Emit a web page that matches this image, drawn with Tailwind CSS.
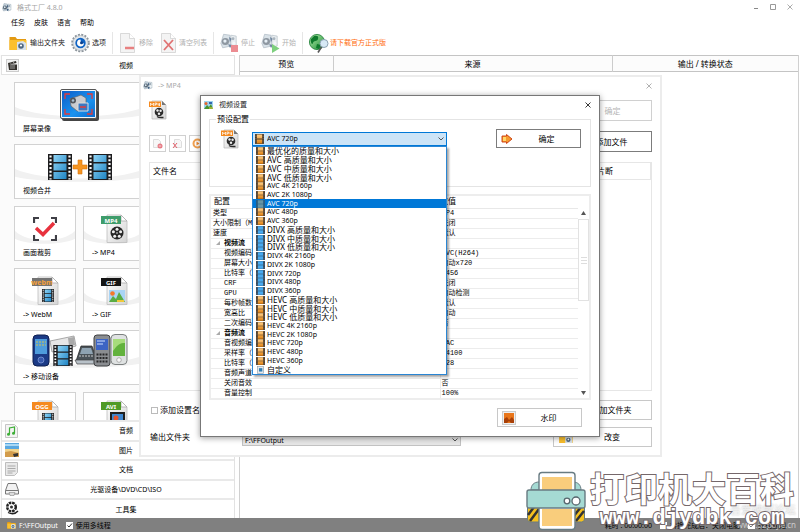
<!DOCTYPE html>
<html lang="zh-CN">
<head>
    <meta charset="UTF-8">
    <meta name="viewport" content="width=device-width, initial-scale=1.0">
    <title>格式工厂 4.8.0</title>
    <script src="https://cdn.jsdelivr.net/npm/@tailwindcss/browser@4"></script>
</head>
<body class="relative h-screen flex flex-col overflow-hidden bg-white text-[7px] leading-[9px] text-black font-['Noto_Sans','Noto_Sans_CJK_SC',sans-serif]">
    <!-- 图标库 -->
    <svg class="absolute w-0 h-0" aria-hidden="true">
        <defs>
            <linearGradient id="blueFrame" x1="0" y1="0" x2="1" y2="1"><stop offset="0" stop-color="#8fd4f5"/><stop offset="1" stop-color="#1f84c4"/></linearGradient>
            <linearGradient id="orangeFrame" x1="0" y1="0" x2="0" y2="1"><stop offset="0" stop-color="#ffd08a"/><stop offset="1" stop-color="#e08010"/></linearGradient>
            <linearGradient id="paper" x1="0" y1="0" x2="1" y2="1"><stop offset="0" stop-color="#ffffff"/><stop offset="1" stop-color="#d4d4d4"/></linearGradient>
            <linearGradient id="screenBlue" x1="0" y1="0" x2="1" y2="1"><stop offset="0" stop-color="#0a5cc8"/><stop offset="0.6" stop-color="#1b93ee"/><stop offset="1" stop-color="#0b6bd0"/></linearGradient>
            <linearGradient id="greenBall" x1="0" y1="0" x2="1" y2="1"><stop offset="0" stop-color="#b9efb0"/><stop offset="1" stop-color="#158a2e"/></linearGradient>
        </defs>
        <symbol id="film-blue" viewBox="0 0 24 26">
            <rect width="24" height="26" fill="#1d1d1f"/>
            <path d="M2.500 1.500v24M21.500 1.500v24" stroke="#fff" stroke-width="2.200" stroke-dasharray="2 1.800"/>
            <path d="M5.500 1h13v7h-13zM5.500 9.500h13v7h-13zM5.500 18h13v7h-13z" fill="url(#blueFrame)"/>
        </symbol>
        <symbol id="film-orange" viewBox="0 0 24 26" preserveAspectRatio="none">
            <rect width="24" height="26" fill="#4a3a2a"/>
            <path d="M2.500 1.500v24M21.500 1.500v24" stroke="#c9b79c" stroke-width="1.500" stroke-dasharray="2 2.500"/>
            <path d="M5 1h14v11h-14zM5 14h14v11h-14z" fill="url(#orangeFrame)"/>
        </symbol>
        <symbol id="film-sky" viewBox="0 0 24 26" preserveAspectRatio="none">
            <rect width="24" height="26" fill="#2f4254"/>
            <path d="M2.500 1.500v24M21.500 1.500v24" stroke="#b3c4d4" stroke-width="1.500" stroke-dasharray="2 2.500"/>
            <path d="M5 1h14v11h-14zM5 14h14v11h-14z" fill="#48aaf0"/>
        </symbol>
        <symbol id="film-steel" viewBox="0 0 24 26" preserveAspectRatio="none">
            <rect width="24" height="26" fill="#2b5d80"/>
            <path d="M5 1h14v11h-14zM5 14h14v11h-14z" fill="#6795a4"/>
        </symbol>
        <symbol id="custom" viewBox="0 0 24 26">
            <rect x="2" y="2" width="20" height="22" fill="#e6eaee" stroke="#8a98a5" stroke-width="2"/>
            <rect x="7" y="7" width="11" height="11" fill="#2f7fb5"/>
        </symbol>
        <symbol id="page" viewBox="0 0 22 30">
            <path d="M1 1h14l6 6v21.500H1z" fill="url(#paper)" stroke="#bdbdbd" stroke-width=".8"/>
            <path d="M15 1v6h6z" fill="#fff" stroke="#aaa" stroke-width=".8"/>
        </symbol>
        <symbol id="reel" viewBox="0 0 14 14">
            <circle cx="7" cy="7" r="6.500" fill="#262626"/>
            <g fill="#eee"><circle cx="7" cy="3.200" r="1.500"/><circle cx="10.600" cy="5.800" r="1.500"/><circle cx="9.300" cy="10.200" r="1.500"/><circle cx="4.700" cy="10.200" r="1.500"/><circle cx="3.400" cy="5.800" r="1.500"/><circle cx="7" cy="7" r=".8"/></g>
        </symbol>
        <symbol id="factory" viewBox="0 0 20 18">
            <path d="M4 1l7 1 1 12-9 2-2-5z" fill="#c6d3dd" stroke="#8597a6" stroke-width=".8"/>
            <path d="M12 2l6 1v11l-6 2z" fill="#dfe6eb" stroke="#91a1ad" stroke-width=".8"/>
            <circle cx="6" cy="9" r="4" fill="#52616f"/><circle cx="5.500" cy="8.500" r="1.800" fill="#dbe8f2"/>
            <path d="M10 4l3 2-2 4zM9 12l5 1-3 3z" fill="#26476e"/>
            <circle cx="14.500" cy="6" r="1.600" fill="#7d8e9c"/><circle cx="15.500" cy="11" r="1.600" fill="#eef3f6"/>
        </symbol>
        <symbol id="folder" viewBox="0 0 18 16">
            <path d="M.5 2h6l1.500 2h9v11H.5z" fill="#e39a12"/>
            <path d="M.5 5h17v10H.5z" fill="#fbc02d"/>
            <path d="M8 7l6-1 3 2v7H8z" fill="#d8e2ea"/><circle cx="12" cy="11" r="2.800" fill="#4f6880"/><circle cx="12" cy="10.500" r="1.100" fill="#fff"/>
        </symbol>
        <symbol id="mp4-orange" viewBox="0 0 18 20">
            <path d="M3 1h10l4 4v14H3z" fill="url(#paper)" stroke="#b5b5b5" stroke-width=".7"/>
            <path d="M13 1v4h4z" fill="#777"/>
            <rect x="0" y="1.500" width="12" height="5.500" fill="#f58a1f"/>
            <path d="M1.500 6V3l1.500 2 1.500-2v3M6 6V3h1.500v1.500H6M9 3v2h2M10.500 3v3" fill="none" stroke="#fff" stroke-width=".7"/>
            <circle cx="10" cy="12" r="4.300" fill="#2b2b2b"/>
            <circle cx="8.500" cy="10.500" r="1.200" fill="#eee"/><circle cx="11.600" cy="10.800" r="1.200" fill="#eee"/><circle cx="10" cy="13.700" r="1.200" fill="#eee"/>
            <path d="M8 16.500c2 1.500 4 1 6.500 1" fill="none" stroke="#2b2b2b" stroke-width="1.400"/>
        </symbol>
        <symbol id="swoosh" viewBox="0 0 130 55" preserveAspectRatio="none">
            <path d="M0 25C28 38 102 38 130 25V33C102 40 28 40 0 33z" fill="#f1f1f1"/>
        </symbol>
        <symbol id="cross" viewBox="0 0 6 6"><path d="M.5.5l5 5M5.500.5l-5 5" stroke="currentColor" stroke-width=".9"/></symbol>
        <symbol id="chevron" viewBox="0 0 6 4"><path d="M.5.5L3 3 5.500.5" fill="none" stroke="#444" stroke-width=".9"/></symbol>
    </svg>

    <!-- 标题栏 -->
    <header class="h-[14px] shrink-0 flex items-center pl-[2px] pr-[7px] text-[#a3a3a3]">
        <svg class="w-[10px] h-[9px] mr-[5px]"><use href="#factory"/></svg>
        <h1>格式工厂 4.8.0</h1>
        <div class="ml-auto flex items-center gap-[11px]">
            <button aria-label="最小化"><svg class="w-[6px] h-[6px]"><path d="M1 4.500h4" stroke="#888"/></svg></button>
            <button aria-label="最大化"><svg class="w-[6px] h-[6px]"><path d="M.5.5h5v5h-5z" fill="none" stroke="#999"/></svg></button>
            <button aria-label="关闭"><svg class="w-[6px] h-[6px]"><use href="#cross"/></svg></button>
        </div>
    </header>

    <!-- 菜单 -->
    <nav class="h-4 shrink-0 flex items-center gap-[9px] pl-[11px]">
        <button>任务</button>
        <button>皮肤</button>
        <button>语言</button>
        <button>帮助</button>
    </nav>

    <!-- 工具栏 -->
    <div class="h-[25px] shrink-0 flex items-center gap-[6px] pl-[9px] text-[#222]">
        <button class="flex items-center gap-[3px]"><svg class="w-[18px] h-4"><use href="#folder"/></svg>输出文件夹</button>
        <button class="flex items-center gap-[2px]">
            <svg class="w-[19px] h-5" viewBox="0 0 19 20">
                <circle cx="9.500" cy="10" r="8.300" fill="none" stroke="#8d959c" stroke-width="2" stroke-dasharray="2 1.300"/>
                <circle cx="9.500" cy="10" r="7.500" fill="#e3e7ea" stroke="#a5adb3" stroke-width=".6"/>
                <circle cx="9.500" cy="10" r="5.200" fill="#0f63c4"/>
                <path d="M9.500 6.500a3.500 3.500 0 1 0 3.500 4l-3-.5z" fill="#fff"/>
                <circle cx="10.500" cy="9.800" r="1.500" fill="#0a3e8c"/>
            </svg>选项
        </button>
        <span class="w-px h-[22px] bg-[#e6e6e6]"></span>
        <button disabled class="flex items-center gap-[2px] text-[#b0b0b0]">
            <svg class="w-[18px] h-5" viewBox="0 0 18 20"><path d="M1.500.5h9l5 5v14h-14z" fill="#f4f4f4" stroke="#ccc" stroke-width=".7"/><path d="M10.500.5v5h5" fill="#fff" stroke="#ccc" stroke-width=".7"/><path d="M6 15h9" stroke="#e88080" stroke-width="2.500"/></svg>移除
        </button>
        <button disabled class="flex items-center gap-[2px] text-[#b0b0b0]">
            <svg class="w-[18px] h-5" viewBox="0 0 18 20"><path d="M2.500.5h9l5 5v14h-14z" fill="#f4f4f4" stroke="#ccc" stroke-width=".7"/><path d="M11.500.5v5h5" fill="#fff" stroke="#ccc" stroke-width=".7"/><path d="M5 7l9 10M14 7L5 17" stroke="#e07272" stroke-width="1.800"/></svg>清空列表
        </button>
        <span class="w-px h-[22px] bg-[#e6e6e6]"></span>
        <button disabled class="flex items-center gap-[2px] text-[#b0b0b0]">
            <svg class="w-[19px] h-5" viewBox="0 0 19 20"><g opacity=".65"><use href="#factory" width="18" height="17"/></g><path d="M11 12h7v7h-7z" fill="#ec8c92"/></svg>停止
        </button>
        <button disabled class="flex items-center gap-[2px] text-[#b0b0b0]">
            <svg class="w-[19px] h-5" viewBox="0 0 19 20"><g opacity=".65"><use href="#factory" width="18" height="17"/></g><path d="M11 11l7.500 4.500L11 20z" fill="#7ed07e"/></svg>开始
        </button>
        <span class="w-px h-[22px] bg-[#e6e6e6]"></span>
        <a href="#" class="flex items-center gap-px text-[#ff6d0a]">
            <svg class="w-5 h-5" viewBox="0 0 20 20">
                <circle cx="8" cy="9" r="7.600" fill="url(#greenBall)" stroke="#1b7c33" stroke-width=".8"/>
                <path d="M5 3c3-1 5 0 4 3S5 7 4 10 1 8 2 6zM8 11l4 1-2 4-3-1z" fill="#0f7a2c"/>
                <circle cx="15" cy="10.500" r="4" fill="#d7e9f6" stroke="#8ba1b1"/>
                <path d="M12.500 14L9 19.500" stroke="#555" stroke-width="1.600"/>
            </svg>请下载官方正式版
        </a>
    </div>

    <main class="flex-1 min-h-0 flex">
        <!-- 左侧分类 -->
        <aside class="w-[235px] shrink-0 flex flex-col bg-[#fbfbfb] pl-px">
            <button class="relative h-5 shrink-0 border border-[#e2e2e2] bg-white pl-4 text-center">
                <svg class="absolute left-[4px] top-[3px] w-[13px] h-[13px]" viewBox="0 0 13 13"><rect x=".5" y=".5" width="12" height="12" fill="#f2f2f2" stroke="#ccc"/><path d="M2 4l8-2 .5 2L3 5.500h8V11H3z" fill="#33302c"/><path d="M4 3.500l1 1.200M7 2.800l1 1.200M4 7h5M4 9h5" stroke="#bbb" stroke-width=".8"/></svg>
                视频
            </button>
            <div class="flex-1 min-h-0 overflow-hidden grid grid-cols-[62px_62px] auto-rows-[55px] content-start gap-[7px] pl-[13px] pt-[7px]">
                <button class="relative col-span-2 border border-[#d2d2d2] bg-white">
                    <svg class="absolute inset-0 w-full h-full"><use href="#swoosh"/></svg>
                    <svg class="absolute inset-x-0 top-[6px] mx-auto w-[39px] h-[32px]" viewBox="0 0 39 32">
                        <rect x="2" y="2" width="37" height="30" rx="2" fill="#444"/>
                        <rect x=".5" y=".5" width="36" height="29" rx="1.500" fill="#f6f6f6" stroke="#555"/>
                        <rect x="2" y="2" width="33" height="26" fill="url(#screenBlue)"/>
                        <path d="M10 5H5v5M27 5h5v5M5 20v5h5M32 20v5h-5" fill="none" stroke="#e23b3b" stroke-width="1.300"/>
                        <path d="M10 10l11-4 5 3v11l-9 2-6-5z" fill="#c9ccd0" stroke="#666" stroke-width=".7"/>
                        <circle cx="13" cy="11.500" r="3" fill="#51565c"/><circle cx="13" cy="11.500" r="1.300" fill="#a7bed0"/>
                        <path d="M18 14h10v8H18z" fill="#3c78c0" stroke="#ddd"/><path d="M20 18h6" stroke="#e23b3b" stroke-width="1.500"/>
                    </svg>
                    <span class="absolute left-2 bottom-[3px]">屏幕录像</span>
                </button>
                <button class="relative col-span-2 border border-[#d2d2d2] bg-white">
                    <svg class="absolute inset-0 w-full h-full"><use href="#swoosh"/></svg>
                    <svg class="absolute inset-x-0 top-[9px] mx-auto w-[64px] h-[26px]" viewBox="0 0 64 26">
                        <use href="#film-blue" width="24" height="26"/>
                        <use href="#film-blue" x="40" width="24" height="26"/>
                        <path d="M30 6h4v5h5v4h-5v5h-4v-5h-5v-4h5z" fill="#f59522" stroke="#d8740a" stroke-width=".6"/>
                    </svg>
                    <span class="absolute left-2 bottom-[3px]">视频合并</span>
                </button>
                <button class="relative border border-[#d2d2d2] bg-white">
                    <svg class="absolute inset-0 w-full h-full"><use href="#swoosh"/></svg>
                    <svg class="absolute inset-x-0 top-[10px] mx-auto w-6 h-6" viewBox="0 0 24 24"><path d="M1 6V1h5M18 1h5v5M23 18v5h-5M6 23H1v-5" fill="none" stroke="#3f3f46" stroke-width="2.200"/><path d="M3 11l7 6.500L21 6" fill="none" stroke="#e8323e" stroke-width="3.500"/></svg>
                    <span class="absolute left-2 bottom-[3px]">画面裁剪</span>
                </button>
                <button class="relative border border-[#d2d2d2] bg-white">
                    <svg class="absolute inset-0 w-full h-full"><use href="#swoosh"/></svg>
                    <svg class="absolute left-4 top-[7px] w-7 h-[30px]" viewBox="0 0 28 30"><use href="#page" x="6" width="22" height="30"/><rect x="1" y="2" width="20" height="8" fill="#3f9d6b"/><text x="11" y="8.500" font-size="6" font-weight="700" fill="#fff" text-anchor="middle">MP4</text><use href="#reel" x="10" y="12" width="14" height="14"/></svg>
                    <span class="absolute left-2 bottom-[3px]">-&gt; MP4</span>
                </button>
                <button class="relative border border-[#d2d2d2] bg-white">
                    <svg class="absolute inset-0 w-full h-full"><use href="#swoosh"/></svg>
                    <svg class="absolute left-4 top-[7px] w-7 h-[30px]" viewBox="0 0 28 30"><use href="#page" x="6" width="22" height="30"/><rect x="1" y="2" width="20" height="8" fill="#737373"/><text x="11" y="8.500" font-size="7" font-weight="700" fill="#f7a13a" text-anchor="middle">webm</text><use href="#film-blue" x="11" y="13" width="12" height="13"/></svg>
                    <span class="absolute left-2 bottom-[3px]">-&gt; WebM</span>
                </button>
                <button class="relative border border-[#d2d2d2] bg-white">
                    <svg class="absolute inset-0 w-full h-full"><use href="#swoosh"/></svg>
                    <svg class="absolute left-4 top-[7px] w-7 h-[30px]" viewBox="0 0 28 30"><use href="#page" x="6" width="22" height="30"/><rect x="1" y="2" width="20" height="8" fill="#151515"/><text x="11" y="8.500" font-size="6" font-weight="700" fill="#fff" text-anchor="middle">GIF</text><rect x="9" y="14" width="16" height="12" fill="#a9d4f5"/><path d="M9 26l4-6 3 3 3-7 6 10z" fill="#5aac43"/><circle cx="12.500" cy="17.500" r="2.300" fill="#f4772a"/><path d="M17 25h7" stroke="#f0c93b" stroke-width="2"/></svg>
                    <span class="absolute left-2 bottom-[3px]">-&gt; GIF</span>
                </button>
                <button class="relative col-span-2 border border-[#d2d2d2] bg-white">
                    <svg class="absolute inset-0 w-full h-full"><use href="#swoosh"/></svg>
                    <svg class="absolute inset-x-0 top-[3px] mx-auto w-24 h-[34px]" viewBox="0 0 96 34">
                        <path d="M18 7l24-5 2 10-24 6z" fill="#e6e6e6" stroke="#888" stroke-width=".7"/><path d="M36 4l6-1 1 8-6 1z" fill="#aaa"/>
                        <rect x="1" y="1" width="16" height="31" rx="4" fill="#1b3a86" stroke="#0e1f50"/>
                        <rect x="3" y="5" width="12" height="15" fill="#4e9cdc"/><path d="M4 8h10M4 11h10" stroke="#d7c04a" stroke-width="1.200" stroke-dasharray="2 1"/><circle cx="9" cy="26" r="3" fill="#3557ab" stroke="#8aa2df" stroke-width=".7"/>
                        <use href="#film-blue" x="21" y="11" width="20" height="21"/>
                        <path d="M49 12h11l5 15H44z" fill="#4b5359" stroke="#222" stroke-width=".7"/><path d="M50 14h9l2 6H48z" fill="#8fa3b2"/><path d="M47 22h15" stroke="#ccc" stroke-dasharray="2 1"/><path d="M43 26h22l-2 4H45z" fill="#b8c1c8" stroke="#444" stroke-width=".7"/>
                        <rect x="62" y="1" width="16" height="31" rx="3" fill="#8a8d91" stroke="#3e4043"/>
                        <rect x="64" y="5" width="12" height="11" fill="#3c64c4"/><path d="M65 7h8M65 10h6" stroke="#cfe0ff"/><path d="M64.500 20.500h11M64.500 24h11M64.500 27.500h11" stroke="#28292b" stroke-width="2" stroke-dasharray="2 1"/>
                        <rect x="79" y="0.500" width="16" height="30" rx="4" fill="#dfe2e2" stroke="#7c8080"/>
                        <rect x="81" y="5" width="12" height="17" fill="#62b23d"/><path d="M81 17c5-7 7-8 12-8V5H81z" fill="#a7dc7c"/><circle cx="87" cy="26" r="2.300" fill="#f8f8f8" stroke="#888" stroke-width=".6"/>
                    </svg>
                    <span class="absolute left-2 bottom-[3px]">-&gt; 移动设备</span>
                </button>
                <button class="relative border border-[#d2d2d2] bg-white">
                    <svg class="absolute left-4 top-[7px] w-7 h-[30px]" viewBox="0 0 28 30"><use href="#page" x="6" width="22" height="30"/><rect x="1" y="2" width="20" height="8" fill="#f58a1f"/><text x="11" y="8.500" font-size="6" font-weight="700" fill="#fff" text-anchor="middle">OGG</text><use href="#film-blue" x="11" y="13" width="12" height="13"/></svg>
                </button>
                <button class="relative border border-[#d2d2d2] bg-white">
                    <svg class="absolute left-4 top-[7px] w-7 h-[30px]" viewBox="0 0 28 30"><use href="#page" x="6" width="22" height="30"/><rect x="1" y="2" width="20" height="8" fill="#4f9a26"/><text x="11" y="8.500" font-size="6" font-weight="700" fill="#fff" text-anchor="middle">AVI</text><rect x="10" y="12" width="15" height="11" fill="#1f1f1f"/><rect x="12" y="14" width="11" height="7" fill="#3d86d0"/><circle cx="16" cy="18" r="2.500" fill="#e5532c"/></svg>
                </button>
            </div>
            <div class="shrink-0 h-[98px] grid auto-rows-fr border-x border-[#e2e2e2] bg-white">
                <button class="relative border-t-2 border-[#e9e9e9] pl-4 text-center">
                    <svg class="absolute left-[3px] top-[2px] w-[13px] h-[14px]" viewBox="0 0 13 14"><path d="M.5.5h9l3 3v10H.5z" fill="#f4f4f4" stroke="#c5c5c5"/><path d="M4.500 10V4l5-1v6" fill="none" stroke="#3fae38" stroke-width="1.200"/><circle cx="3.500" cy="10.300" r="1.500" fill="#3fae38"/><circle cx="8.500" cy="9.300" r="1.500" fill="#3fae38"/></svg>音频
                </button>
                <button class="relative border-t-2 border-[#e9e9e9] pl-4 text-center">
                    <svg class="absolute left-[3px] top-px w-[14px] h-[14px]" viewBox="0 0 14 14"><rect width="14" height="14" fill="#5aa8e0"/><path d="M0 6h14v4H0z" fill="#f1d38c"/><path d="M0 9l6-1 8 2v4H0z" fill="#d29c4c"/><path d="M8 11l5-1v3l-4 1z" fill="#333"/><path d="M0 1h14v2H0z" fill="#a9d8f5"/></svg>图片
                </button>
                <button class="relative border-t-2 border-[#e9e9e9] pl-4 text-center">
                    <svg class="absolute left-[3px] top-px w-[13px] h-[14px]" viewBox="0 0 13 14"><path d="M.5.5h12v10l-3 3h-9z" fill="#e9e9e9" stroke="#bdbdbd"/><path d="M2.500 4h8M2.500 6.500h8M2.500 9h8M2.500 11h5" stroke="#a2a2a2" stroke-width=".9"/></svg>文档
                </button>
                <button class="relative border-t-2 border-[#e9e9e9] pl-4 text-center">
                    <svg class="absolute left-[3px] top-[2px] w-[14px] h-[13px]" viewBox="0 0 14 13"><path d="M3 .5h8l2.500 7v3.500H.5V7.500z" fill="#f2f2f2" stroke="#777"/><path d="M.5 7.500h13" stroke="#777"/><path d="M4 9.500h6l-1 3H5z" fill="#ddd" stroke="#888" stroke-width=".6"/></svg>光驱设备\DVD\CD\ISO
                </button>
                <button class="relative border-t-2 border-[#e9e9e9] pl-4 text-center">
                    <svg class="absolute left-[3px] top-px w-[14px] h-[14px]" viewBox="0 0 14 14"><circle cx="6.500" cy="6" r="4.300" fill="none" stroke="#222" stroke-width="2.500" stroke-dasharray="2.600 .8"/><circle cx="6.500" cy="6" r="1.500" fill="#333"/><path d="M3 11.500c4 2 7 2 10-1.500" fill="none" stroke="#222" stroke-width="1.300"/></svg>工具集
                </button>
            </div>
        </aside>

        <!-- 右侧任务列表 -->
        <section class="flex-1 min-w-0 ml-1 mr-px border-x border-[#d0d0d0]">
            <table class="w-full table-fixed text-[8px] leading-[10px]">
                <thead>
                    <tr class="h-4 border-y border-[#c4c4c4] bg-[#fcfcfc]">
                        <th class="w-1/6 font-normal border-r border-[#ccc]">预览</th>
                        <th class="w-1/2 font-normal border-r border-[#ccc]">来源</th>
                        <th class="w-1/3 font-normal">输出 / 转换状态</th>
                    </tr>
                </thead>
            </table>
        </section>
    </main>

    <!-- 状态栏 -->
    <footer class="h-[14px] shrink-0 flex items-center bg-[#808080] pl-[7px] pr-[14px]">
        <svg class="w-[9px] h-2 mr-[3px]"><use href="#folder"/></svg>
        <a href="#" class="text-white">F:\FFOutput</a>
        <label class="ml-2 flex items-center gap-[3px]">
            <input type="checkbox" checked class="peer sr-only">
            <svg class="w-[7px] h-[7px] bg-white" viewBox="0 0 7 7"><path d="M1.500 3.500L3 5l3-3.500" fill="none" stroke="#333"/></svg>
            使用多线程
        </label>
        <span class="ml-auto mr-2">耗时 : 00:00:00</span>
        <label class="flex items-center gap-[3px]"><input type="checkbox" class="appearance-none w-[7px] h-[7px] bg-white">转换完成后：关闭电脑</label>
        <label class="ml-2 flex items-center gap-[3px]">
            <input type="checkbox" checked class="peer sr-only">
            <svg class="w-[7px] h-[7px] bg-white" viewBox="0 0 7 7"><path d="M1.500 3.500L3 5l3-3.500" fill="none" stroke="#333"/></svg>
            完成通知
        </label>
    </footer>

    <!-- MP4 窗口 -->
    <section class="absolute left-[139px] top-[75px] w-[523px] flex flex-col border-2 border-[#ececec] bg-white px-2 pb-2 text-[8px] leading-[10px]">
        <header class="h-[17px] -ml-[6px] flex items-center text-[7px] text-[#a8a8a8]">
            <svg class="w-[10px] h-[9px] mr-[5px]"><use href="#factory"/></svg>
            <h2>-&gt; MP4</h2>
            <button aria-label="关闭" class="ml-auto"><svg class="w-[6px] h-[6px]"><use href="#cross"/></svg></button>
        </header>
        <div class="mt-[6px] flex justify-between">
            <svg class="w-[18px] h-5"><use href="#mp4-orange"/></svg>
            <button disabled class="w-[99px] h-[21px] border border-[#d0d0d0] pl-5 text-[#b5b5b5]">确定</button>
        </div>
        <div class="mt-[10px] flex justify-between items-end">
            <div class="flex gap-[3px]">
                <button aria-label="移除" class="w-[17px] h-[17px] border border-[#d0d0d0] grid place-items-center"><svg class="w-[11px] h-[11px]" viewBox="0 0 11 11"><path d="M1.500 1.500h5l2 2v6h-7z" fill="#f7f7f7" stroke="#ddd"/><circle cx="8" cy="8" r="2.500" fill="#e77a84"/><path d="M6.800 8h2.400" stroke="#fff" stroke-width=".7"/></svg></button>
                <button aria-label="清空" class="w-[17px] h-[17px] border border-[#d0d0d0] grid place-items-center"><svg class="w-[11px] h-[11px]" viewBox="0 0 11 11"><path d="M2.500 1.500h5l2 2v6h-7z" fill="#f7f7f7" stroke="#ddd"/><path d="M1 5l4 5M5 5l-4 5" stroke="#e2606a"/></svg></button>
                <button aria-label="播放" class="w-[17px] h-[17px] border border-[#d0d0d0] grid place-items-center"><svg class="w-[11px] h-[11px]" viewBox="0 0 11 11"><circle cx="5.500" cy="5.500" r="4" fill="#fff" stroke="#f0a050" stroke-width="2"/><path d="M4.500 3.500l3 2-3 2z" fill="#f08a30"/></svg></button>
            </div>
            <button class="w-[99px] h-[21px] border border-[#7c7c7c] pl-[18px]">添加文件</button>
        </div>
        <div class="mt-[10px] h-[229px] border border-[#e6e6e6]">
            <table class="w-full">
                <thead>
                    <tr class="h-4 border-b border-[#e6e6e6] text-left">
                        <th class="font-normal pl-[3px]">文件名</th>
                        <th class="font-normal w-[53px] border-r border-[#e6e6e6]">片断</th>
                        <th class="w-px"></th>
                    </tr>
                </thead>
            </table>
        </div>
        <div class="mt-[9px] flex justify-between items-center">
            <label class="flex items-center gap-[2px] pl-[2px]"><input type="checkbox" class="appearance-none w-[7px] h-[7px] border border-[#bbb]">添加设置名称</label>
            <button class="w-[99px] h-5 border border-[#c8c8c8] pl-[18px]">添加文件夹</button>
        </div>
        <div class="mt-[7px] flex items-center">
            <label for="outputFolder" class="w-[93px] pl-px">输出文件夹</label>
            <div class="relative w-[219px] mt-[6px]">
                <select id="outputFolder" class="block appearance-none w-full h-3 border border-[#c2c2c2] bg-[#e6e6e6] pl-[2px] text-[7px] leading-[9px]">
                    <option>F:\FFOutput</option>
                </select>
                <svg class="absolute right-[3px] top-1 w-[6px] h-1"><use href="#chevron"/></svg>
            </div>
            <button class="ml-auto w-[99px] h-5 border border-[#c8c8c8] flex items-center pl-[5px]">
                <svg class="w-[14px] h-[13px]"><use href="#folder"/></svg><span class="flex-1">改变</span>
            </button>
        </div>
    </section>

    <!-- 视频设置窗口 -->
    <section class="absolute left-[200px] top-[95px] w-[400px] flex flex-col border border-[#777] bg-white px-2 pb-[9px] text-[8px] leading-[10px] shadow-[0_1px_6px_rgba(0,0,0,0.4)]">
        <header class="h-[18px] shrink-0 -ml-[5px] flex items-center text-[7px] text-[#222]">
            <svg class="w-[9px] h-2 mr-[6px]" viewBox="0 0 9 8"><rect width="9" height="8" fill="#9fd3ef"/><path d="M0 8l3-4 2 2 2-3 2 5z" fill="#46932f"/><circle cx="2" cy="2.500" r="1.500" fill="#e8652c"/><path d="M5 1h3v2H5z" fill="#3266b0"/><path d="M5 7h4" stroke="#f0cf3b"/></svg>
            <h2>视频设置</h2>
            <button aria-label="关闭" class="ml-auto"><svg class="w-[6px] h-[6px]"><use href="#cross"/></svg></button>
        </header>
        <fieldset class="h-[73px] shrink-0 border border-[#e4e4e4] pl-[11px] pr-[9px]">
            <legend class="-ml-[5px] px-px">预设配置</legend>
            <div class="flex items-start pt-[5px]">
                <svg class="w-[18px] h-5 mr-[13px]"><use href="#mp4-orange"/></svg>
                <div class="relative flex-none w-[195px] mt-[3px]">
                    <select aria-label="预设配置" class="block appearance-none w-full h-[14px] border border-[#0078d7] bg-[#cce4f7] pl-[14px] text-[7px] leading-[10px]">
                        <option>AVC 720p</option>
                    </select>
                    <svg class="absolute left-[3px] top-[2px] w-[9px] h-[10px]"><use href="#film-orange"/></svg>
                    <svg class="absolute right-[3px] top-[5px] w-[6px] h-1"><use href="#chevron"/></svg>
                    <ul id="presetList" role="listbox" aria-label="预设" class="absolute z-10 left-0 right-0 top-full h-[229px] grid auto-rows-fr border border-[#2a86d4] bg-white shadow-[2px_2px_2px_rgba(0,0,0,0.35)]"></ul>
                </div>
                <button class="ml-auto w-[85px] h-[19px] border border-[#7c7c7c] flex items-center pl-1">
                    <svg class="w-3 h-[10px]" viewBox="0 0 12 10"><path d="M1 2h4.500V.5L11 5 5.500 9.500V8H1z" fill="#f79a2e" stroke="#c8380c" stroke-width=".9"/><path d="M2 3h3v4H2z" fill="#ffd768"/></svg>
                    <span class="flex-1">确定</span>
                </button>
            </div>
        </fieldset>
        <div class="relative mt-[7px] border-2 border-[#ededed]">
            <table class="w-full table-fixed font-['Liberation_Mono','Noto_Sans_CJK_SC',monospace] text-[7px] leading-[9px]">
                <thead>
                    <tr class="h-3 border-b border-[#e8e8e8] text-left text-[8px] leading-[10px]">
                        <th class="w-[229px] font-normal pl-[3px]">配置</th>
                        <th class="font-normal">数值</th>
                    </tr>
                </thead>
                <tbody id="settingRows"></tbody>
            </table>
            <div class="absolute top-3 right-0 bottom-0 w-[11px] flex flex-col items-center bg-white py-[3px]">
                <svg class="w-[5px] h-[4px]"><path d="M0 4L2.500 0 5 4z" fill="#555"/></svg>
                <div class="mt-1 w-full h-[82px] border border-[#e2e2e2] flex flex-col items-center justify-center gap-[2px]">
                    <span class="w-[6px] h-px bg-[#ddd]"></span>
                    <span class="w-[6px] h-px bg-[#ddd]"></span>
                    <span class="w-[6px] h-px bg-[#ddd]"></span>
                </div>
                <svg class="mt-auto w-[5px] h-[4px]"><path d="M0 0h5L2.500 4z" fill="#555"/></svg>
            </div>
        </div>
        <button class="mt-2 mr-[9px] self-end w-[85px] h-[19px] border border-[#c8c8c8] flex items-center pl-1">
            <svg class="w-[14px] h-[14px]" viewBox="0 0 14 14"><rect x=".5" y=".5" width="13" height="13" fill="#eee" stroke="#ccc"/><rect x="2" y="2" width="10" height="10" fill="#e9761a"/><path d="M2 12V8l3-2 2 3 3-3 2 3v3H9l-2-2-2 2z" fill="#a84008"/></svg>
            <span class="flex-1">水印</span>
        </button>
    </section>

    <!-- 论坛水印 -->
    <div class="absolute right-1 bottom-0 flex flex-col items-end text-white/60 pointer-events-none">
        <span class="text-[11px] leading-4 [text-shadow:0_0_2px_#bbb]">吾爱破解论坛</span>
        <span class="text-[8px] leading-[14px]">www.52pojie.cn</span>
    </div>

    <!-- 水印 -->
    <div class="absolute right-[6px] bottom-0 flex items-end gap-1 z-20 pointer-events-none">
        <svg class="w-[60px] h-[60px] mb-px" viewBox="0 0 60 60">
            <path d="M5 19c0-5 3-8 8-8h34c5 0 8 3 8 8z" fill="#a5dad3" stroke="#687b82"/>
            <path d="M1.500 36h57v12a3 3 0 0 1-3 3h-51a3 3 0 0 1-3-3z" fill="#f5c01f" stroke="#687b82"/>
            <path d="M2 44l6-8M4 50l9-12M50 50l8-10M47 46l8-10" stroke="#333" stroke-width="2.500"/>
            <rect x="13" y="1.500" width="36" height="57" rx="3" fill="#fff" stroke="#687b82" stroke-width="1.400"/>
            <path d="M16 6h30v13H16zM16 38h30v17H16z" fill="#f9cd7c"/>
            <rect x="1" y="19" width="58" height="18" rx="2" fill="#a5dad3" stroke="#687b82" stroke-width="1.400"/>
            <circle cx="41" cy="30" r="2.800" fill="#fff" stroke="#56666d" stroke-width="1.300"/><circle cx="50" cy="30" r="4" fill="#fff" stroke="#56666d" stroke-width="1.300"/>
        </svg>
        <div class="flex flex-col items-center font-bold text-white [-webkit-text-stroke:2px_#75676a] [paint-order:stroke_fill]">
            <span class="text-[34px] leading-[34px]">打印机大百科</span>
            <span class="font-['Liberation_Mono',monospace] text-[22px] leading-[26px]">www.djydbk.com</span>
        </div>
    </div>

    <script>
        // 预设下拉列表
        const sizes = ['高质量和大小', '中质量和大小', '低质量和大小', '4K 2160p', '2K 1080p', '720p', '480p', '360p'];
        const presets = [['最优化的质量和大小', 'film-orange']];
        sizes.forEach(s => presets.push(['AVC ' + s, 'film-orange']));
        sizes.forEach(s => presets.push(['DIVX ' + s, 'film-sky']));
        sizes.forEach(s => presets.push(['HEVC ' + s, 'film-orange']));
        presets.push(['自定义', 'custom']);

        document.getElementById('presetList').innerHTML = presets.map(([name, icon]) => {
            const on = name === 'AVC 720p';
            const row = on ? 'bg-[#0078d7] text-white' : '';
            const size = /[一-龥]/.test(name) ? 'text-[8px]' : 'text-[7px]';
            return `<li role="option" aria-selected="${on}" class="min-h-0 flex items-center gap-[2px] pl-[3px] leading-[8px] ${size} ${row}">
                <svg class="w-[9px] h-2"><use href="#${on ? 'film-steel' : icon}"/></svg>${name}</li>`;
        }).join('');

        // 参数表，第三项为分组标题
        const settings = [
            ['类型', 'MP4', 'top'], ['大小限制（MB）', '关闭', 'top'], ['速度', '默认', 'top'],
            ['视频流', '', 'group'],
            ['视频编码', 'AVC(H264)'], ['屏幕大小', '自动x720'], ['比特率（KB/秒）', '4456'], ['CRF', '关闭'], ['GPU', '自动检测'],
            ['每秒帧数', '默认'], ['宽高比', '自动'], ['二次编码', '否'],
            ['音频流', '', 'group'],
            ['音视频编码', 'AAC'], ['采样率（赫兹）', '44100'], ['比特率（KB/秒）', '128'], ['音频声道', '2'],
            ['关闭音效', '否'], ['音量控制', '100%']
        ];
        document.getElementById('settingRows').innerHTML = settings.map(([name, value, kind]) => {
            const pad = kind === 'top' ? 'pl-[2px]' : kind === 'group' ? 'pl-[5px] font-bold' : 'pl-[13px]';
            const label = kind === 'group'
                ? `<span class="flex items-center gap-1"><svg class="w-1 h-1"><path d="M4 0v4H0z" fill="#aaa"/></svg>${name}</span>`
                : name;
            return `<tr class="h-[10px] border-b border-[#ececec] last:border-b-0"><td class="${pad}">${label}</td><td class="border-l border-[#ececec] pl-px">${value}</td></tr>`;
        }).join('');
    </script>
</body>
</html>
